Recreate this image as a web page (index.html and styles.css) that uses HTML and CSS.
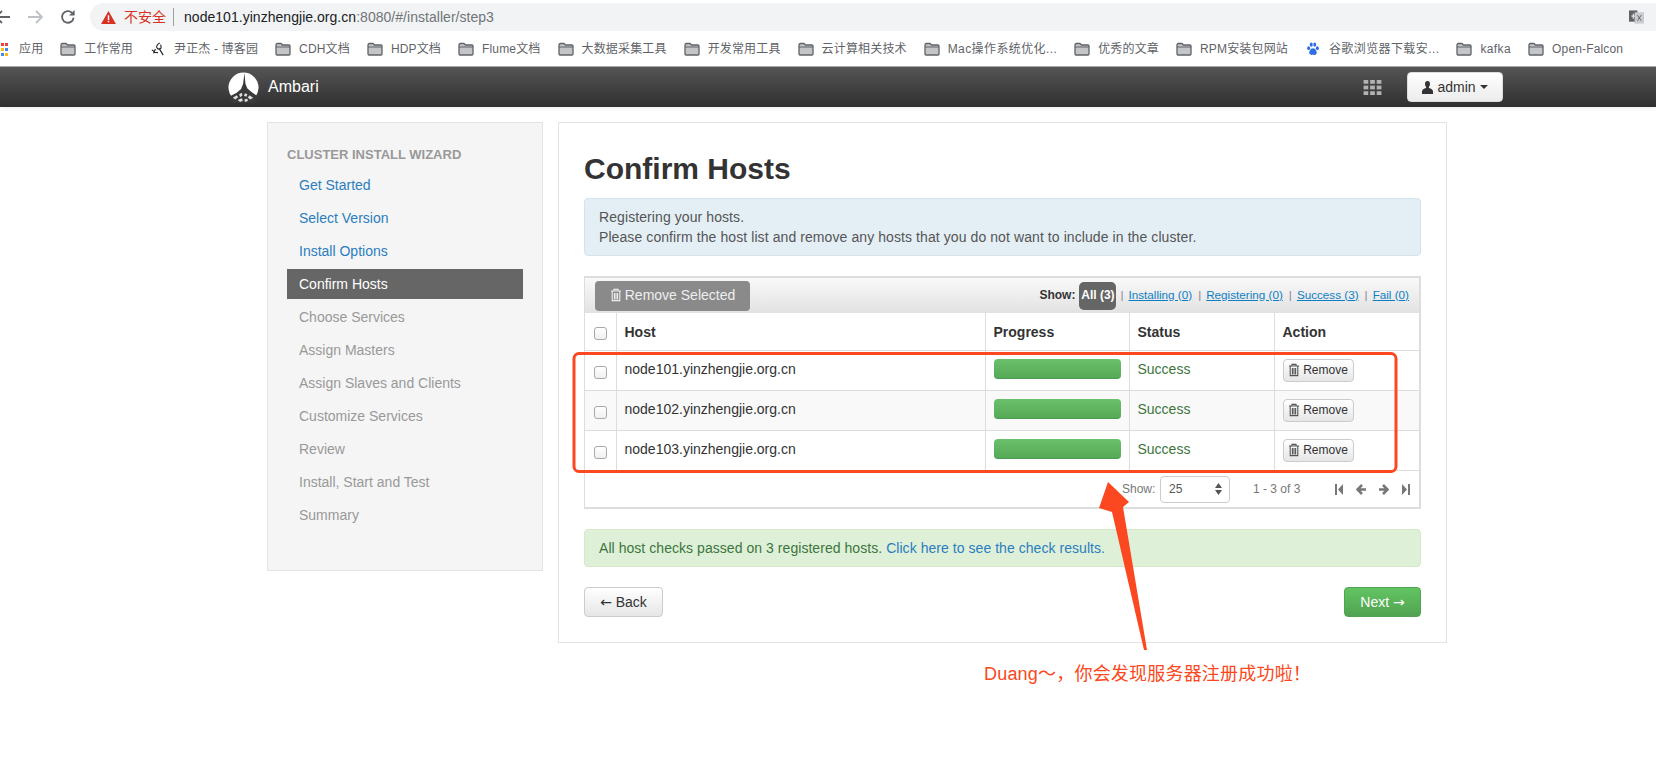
FILE: index.html
```html
<!DOCTYPE html>
<html lang="zh-CN">
<head>
<meta charset="utf-8">
<title>Ambari</title>
<link rel="stylesheet" href="styles.css">
</head>
<body>
<svg width="0" height="0" class="defs">
  <defs>
    <symbol id="folder" viewBox="0 0 16 14"><path d="M1 3.2 Q1 1.5 2.5 1.5 H6 L7.5 3 H14 Q15 3 15 4 V12 Q15 13 14 13 H2 Q1 13 1 12 Z" fill="#c4c5c7" stroke="#5f6368" stroke-width="1.3"/><path d="M1 5 H15" stroke="#5f6368" stroke-width="1"/></symbol>
    <symbol id="trash" viewBox="0 0 12 14"><path d="M1 3 H11 M4 3 V1.4 H8 V3 M2.2 3.4 V12.6 H9.8 V3.4 M4.4 5 V11.4 M6 5 V11.4 M7.6 5 V11.4" fill="none" stroke="currentColor" stroke-width="1.1"/></symbol>
  </defs>
</svg>

<header class="chrome">
  <div class="toolbar">
    <svg class="nav-ic back-ic" viewBox="0 0 16 16"><path d="M16 8 H2 M8 2 L2 8 L8 14" fill="none" stroke="#5f6368" stroke-width="1.8"/></svg>
    <svg class="nav-ic fwd-ic" viewBox="0 0 16 16"><path d="M0 8 H14 M8 2 L14 8 L8 14" fill="none" stroke="#bdc1c6" stroke-width="1.8"/></svg>
    <svg class="nav-ic reload-ic" viewBox="0 0 16 16"><path d="M13.6 8.6 A5.8 5.8 0 1 1 12 3.9" fill="none" stroke="#5f6368" stroke-width="1.8"/><path d="M14.6 1 V6.6 H9 Z" fill="#5f6368"/></svg>
    <div class="omnibox">
      <svg class="warn-ic" viewBox="0 0 16 14"><path d="M8 0 L16 14 H0 Z" fill="#d93025"/><path d="M7.2 4.6 H8.8 V9.6 H7.2 Z M7.2 10.6 H8.8 V12.2 H7.2 Z" fill="#fff"/></svg>
      <span class="insecure">不安全</span>
      <span class="omni-sep"></span>
      <span class="url">node101.yinzhengjie.org.cn<span class="url-rest">:8080/#/installer/step3</span></span>
    </div>
    <svg class="translate-ic" viewBox="0 0 16 14"><rect x="0" y="0" width="9" height="12" fill="#5f6368"/><rect x="6" y="2" width="10" height="12" fill="#c9cbce"/><path d="M2.5 6 H6.5 M4.5 3.5 V9" stroke="#fff" stroke-width="1"/><path d="M9 5 L13 11 M13 5 L9 11" stroke="#5f6368" stroke-width="1"/></svg>
  </div>
  <nav class="bookmarks">
    <a class="bm bm-apps"><svg class="bm-ic apps-ic" viewBox="0 0 8 13"><rect x="-4" y="0" width="3" height="3" fill="#ea4335"/><rect x="1" y="0" width="3" height="3" fill="#ea4335"/><rect x="5" y="0" width="3" height="3" fill="#ea4335"/><rect x="1" y="5" width="3" height="3" fill="#fbbc04"/><rect x="5" y="5" width="3" height="3" fill="#4285f4"/><rect x="1" y="10" width="3" height="3" fill="#4285f4"/><rect x="5" y="10" width="3" height="3" fill="#fbbc04"/></svg>应用</a>
    <a class="bm"><svg class="bm-ic"><use href="#folder"/></svg>工作常用</a>
    <a class="bm"><svg class="bm-ic" viewBox="0 0 16 16"><path d="M1 9 Q5 13 8 12 M10 1 Q4 5 8 8 Q13 9 11 3 M9 7 L14 15 M5 8 L3 13" fill="none" stroke="#222" stroke-width="1.3"/></svg>尹正杰 - 博客园</a>
    <a class="bm"><svg class="bm-ic"><use href="#folder"/></svg>CDH文档</a>
    <a class="bm"><svg class="bm-ic"><use href="#folder"/></svg>HDP文档</a>
    <a class="bm"><svg class="bm-ic"><use href="#folder"/></svg>Flume文档</a>
    <a class="bm"><svg class="bm-ic"><use href="#folder"/></svg>大数据采集工具</a>
    <a class="bm"><svg class="bm-ic"><use href="#folder"/></svg>开发常用工具</a>
    <a class="bm"><svg class="bm-ic"><use href="#folder"/></svg>云计算相关技术</a>
    <a class="bm bm-long"><svg class="bm-ic"><use href="#folder"/></svg>Mac操作系统优化...</a>
    <a class="bm"><svg class="bm-ic"><use href="#folder"/></svg>优秀的文章</a>
    <a class="bm"><svg class="bm-ic"><use href="#folder"/></svg>RPM安装包网站</a>
    <a class="bm bm-long"><svg class="bm-ic" viewBox="0 0 16 16"><g fill="#2f6fe4"><ellipse cx="3" cy="7" rx="1.7" ry="2.2"/><ellipse cx="6" cy="3" rx="1.7" ry="2.4"/><ellipse cx="10" cy="3" rx="1.7" ry="2.4"/><ellipse cx="13" cy="7" rx="1.7" ry="2.2"/><path d="M8 7 C5 7 3 11 4 13.5 C5 15.5 7 14.6 8 14.6 C9 14.6 11 15.5 12 13.5 C13 11 11 7 8 7 Z"/></g></svg>谷歌浏览器下载安...</a>
    <a class="bm bm-wide"><svg class="bm-ic"><use href="#folder"/></svg>kafka</a>
    <a class="bm"><svg class="bm-ic"><use href="#folder"/></svg>Open-Falcon</a>
  </nav>
</header>

<div class="navbar">
  <div class="brand">
    <svg class="logo" viewBox="0 0 32 32">
      <circle cx="16" cy="16" r="15.5" fill="#fff"/>
      <path d="M17 1 L18 12 L20 17 L24 20.5 L32 26 L28 32 H4 L0 26 L9 21.5 L13.5 17.5 L15.6 12 Z" fill="#3a3a3a"/>
      <path d="M5 26.5 L9 24 L10.5 26 L7.5 28.5 Z M11.5 23 L14 21.5 L15 24 L12.5 26 Z M17.5 22 L20 23 L19 25.5 L16.5 24.5 Z M22 24 L26 26.5 L23 28.5 L20.5 26.5 Z M10 29 L14 27 L15.5 29.5 L12.5 31 Z M17 28 L20 27.5 L20.5 30 L17.5 31 Z" fill="#e0e0e0"/>
    </svg>
    <span class="brand-name">Ambari</span>
  </div>
  <div class="nav-right">
    <svg class="grid-ic" viewBox="0 0 19 16"><g fill="#b3b3b3"><rect width="5" height="4"/><rect x="7" width="5" height="4"/><rect x="14" width="5" height="4"/><rect y="6" width="5" height="4"/><rect x="7" y="6" width="5" height="4"/><rect x="14" y="6" width="5" height="4"/><rect y="12" width="5" height="4"/><rect x="7" y="12" width="5" height="4"/><rect x="14" y="12" width="5" height="4"/></g></svg>
    <button class="admin-btn"><svg class="user-ic" viewBox="0 0 11 13"><path d="M5.5 0 C3.8 0 3 1.3 3 3 C3 4.4 3.6 5.4 4.2 6 L4 7 C2 7.6 0 8.4 0 10.5 V13 H11 V10.5 C11 8.4 9 7.6 7 7 L6.8 6 C7.4 5.4 8 4.4 8 3 C8 1.3 7.2 0 5.5 0 Z" fill="#333"/></svg>admin<span class="caret"></span></button>
  </div>
</div>

<main class="page">
  <aside class="wizard">
    <h2 class="wizard-title">CLUSTER INSTALL WIZARD</h2>
    <ul class="steps">
      <li class="step step-done">Get Started</li>
      <li class="step step-done">Select Version</li>
      <li class="step step-done">Install Options</li>
      <li class="step step-active">Confirm Hosts</li>
      <li class="step">Choose Services</li>
      <li class="step">Assign Masters</li>
      <li class="step">Assign Slaves and Clients</li>
      <li class="step">Customize Services</li>
      <li class="step">Review</li>
      <li class="step">Install, Start and Test</li>
      <li class="step">Summary</li>
    </ul>
  </aside>

  <section class="panel">
    <h1 class="title">Confirm Hosts</h1>
    <div class="alert alert-info">Registering your hosts.<br>Please confirm the host list and remove any hosts that you do not want to include in the cluster.</div>

    <div class="hosts">
      <div class="hosts-toolbar">
        <button class="remove-selected"><svg class="trash-ic"><use href="#trash"/></svg>Remove Selected</button>
        <div class="filters">
          <b class="filters-label">Show:</b>
          <span class="pill">All (3)</span>
          <span class="sep">|</span><a class="filter">Installing (0)</a>
          <span class="sep">|</span><a class="filter">Registering (0)</a>
          <span class="sep">|</span><a class="filter">Success (3)</a>
          <span class="sep">|</span><a class="filter">Fail (0)</a>
        </div>
      </div>
      <table class="hosts-table">
        <colgroup><col class="c-check"><col class="c-host"><col class="c-prog"><col class="c-status"><col class="c-action"></colgroup>
        <thead>
          <tr><th><input type="checkbox" class="cb"></th><th>Host</th><th>Progress</th><th>Status</th><th>Action</th></tr>
        </thead>
        <tbody>
          <tr>
            <td><input type="checkbox" class="cb"></td><td>node101.yinzhengjie.org.cn</td>
            <td><div class="bar"></div></td><td class="ok">Success</td>
            <td><button class="remove"><svg class="trash-ic small"><use href="#trash"/></svg>Remove</button></td>
          </tr>
          <tr class="alt">
            <td><input type="checkbox" class="cb"></td><td>node102.yinzhengjie.org.cn</td>
            <td><div class="bar"></div></td><td class="ok">Success</td>
            <td><button class="remove"><svg class="trash-ic small"><use href="#trash"/></svg>Remove</button></td>
          </tr>
          <tr>
            <td><input type="checkbox" class="cb"></td><td>node103.yinzhengjie.org.cn</td>
            <td><div class="bar"></div></td><td class="ok">Success</td>
            <td><button class="remove"><svg class="trash-ic small"><use href="#trash"/></svg>Remove</button></td>
          </tr>
        </tbody>
      </table>
      <div class="hosts-footer">
        <span class="show-label">Show:</span>
        <div class="size-select"><span>25</span><svg class="updown" viewBox="0 0 7 12"><path d="M3.5 0 L7 5 H0 Z M0 7 H7 L3.5 12 Z" fill="#555"/></svg></div>
        <span class="range">1 - 3 of 3</span>
        <div class="pager">
          <svg class="pg-edge" viewBox="0 0 8 11"><path d="M0 0 H2 V11 H0 Z M8 0 V11 L3 5.5 Z" fill="#777"/></svg>
          <svg class="pg-arrow" viewBox="0 0 10 11"><path d="M10 5.5 H2 M6 1 L1.5 5.5 L6 10" fill="none" stroke="#777" stroke-width="2.6"/></svg>
          <svg class="pg-arrow" viewBox="0 0 10 11"><path d="M0 5.5 H8 M4 1 L8.5 5.5 L4 10" fill="none" stroke="#777" stroke-width="2.6"/></svg>
          <svg class="pg-edge" viewBox="0 0 8 11"><path d="M8 0 H6 V11 H8 Z M0 0 V11 L5 5.5 Z" fill="#777"/></svg>
        </div>
      </div>
    </div>

    <div class="alert alert-success">All host checks passed on 3 registered hosts. <a class="check-link">Click here to see the check results.</a></div>

    <div class="actions">
      <button class="btn-back"><span class="arr">←</span> Back</button>
      <button class="btn-next">Next <span class="arr">→</span></button>
    </div>
  </section>
</main>

<svg class="markup" viewBox="0 0 1656 779">
  <rect x="574" y="353.5" width="822" height="118" rx="5" fill="none" stroke="#fb4820" stroke-width="3"/>
  <path d="M1108 482 L1129 502 L1123 507 L1147 650 L1144 650 L1112 512 L1099 508 Z" fill="#fb4820"/>
</svg>
<div class="note">Duang～，你会发现服务器注册成功啦！</div>
</body>
</html>
```

FILE: styles.css
```css
* { box-sizing: border-box; }
html, body { margin: 0; padding: 0; }
body {
  width: 1656px;
  height: 779px;
  overflow: hidden;
  position: relative;
  background: #fff;
  color: #333;
  font: 14px/20px "Liberation Sans", "Noto Sans CJK SC", sans-serif;
}
.defs { position: absolute; }
button { font-family: inherit; margin: 0; }

/* browser chrome */
.chrome { height: 67px; border-bottom: 1px solid #a9a9a9; background: #fff; overflow: hidden; }
.toolbar { height: 34px; display: flex; align-items: center; position: relative; }
.nav-ic { width: 16px; height: 16px; flex: none; }
.back-ic { margin-left: -6px; }
.fwd-ic { margin-left: 18px; }
.reload-ic { margin-left: 16px; }
.omnibox {
  margin-left: 14px;
  width: 1570px;
  height: 28px;
  background: #f1f3f4;
  border-radius: 14px 0 0 14px;
  display: flex;
  align-items: center;
  padding-left: 11px;
  flex: none;
}
.warn-ic { width: 15px; height: 13px; flex: none; }
.insecure { margin-left: 8px; color: #d93025; font-size: 14px; }
.omni-sep { width: 1px; height: 18px; background: #9aa0a6; margin: 0 10px 0 7px; }
.url { color: #202124; font-size: 14px; letter-spacing: .035px; }
.url-rest { color: #70757a; }
.translate-ic { position: absolute; left: 1629px; top: 10px; width: 15px; height: 14px; }

.bookmarks { height: 29px; padding-top: 1px; display: flex; align-items: center; color: #5f6368; font-size: 12px; letter-spacing: .16px; white-space: nowrap; }
.bm { display: flex; align-items: center; margin-right: 17px; }
.bm-long { letter-spacing: .4px; }
.bm-wide { letter-spacing: .4px; }
.bm-ic { width: 16px; height: 14px; margin-right: 8px; flex: none; overflow: visible; }
.apps-ic { width: 8px; height: 13px; margin-right: 11px; }

/* app navbar */
.navbar {
  height: 40px;
  background: linear-gradient(#555, #2f2f2f);
  display: flex;
  justify-content: space-between;
  align-items: center;
  padding: 0 153px 0 228px;
  box-shadow: 0 2px 3px rgba(0,0,0,.06);
}
.brand { display: flex; align-items: center; }
.logo { width: 31px; height: 31px; }
.brand-name { color: #fff; font-size: 16px; margin-left: 9px; }
.nav-right { display: flex; align-items: center; }
.grid-ic { width: 19px; height: 15px; margin-right: 25px; }
.admin-btn {
  width: 96px;
  height: 30px;
  background: linear-gradient(#fff, #ececec);
  border: 1px solid #ddd;
  border-radius: 4px;
  color: #333;
  font-size: 14px;
  display: flex;
  align-items: center;
  justify-content: center;
  padding: 0;
}
.user-ic { width: 11px; height: 13px; margin-right: 4px; }
.caret { border: 4px solid transparent; border-top-color: #333; border-bottom: 0; margin-left: 4px; }

/* page */
.page { display: flex; align-items: flex-start; gap: 15px; padding: 15px 0 0 267px; }
.wizard {
  width: 276px;
  height: 449px;
  background: #f5f5f5;
  border: 1px solid #e3e3e3;
  padding: 23px 19px 0;
}
.wizard-title { margin: 0; font-size: 13px; line-height: 18px; font-weight: bold; color: #999; }
.steps { list-style: none; margin: 6px 0 0; padding: 0; }
.step { height: 30px; line-height: 30px; margin-bottom: 3px; padding-left: 12px; color: #999; }
.step-done { color: #2a7ebf; }
.step-active { background: #666; color: #fff; }

.panel {
  width: 889px;
  height: 521px;
  border: 1px solid #e3e3e3;
  padding: 28px 25px 0;
}
.title { margin: 0 0 11px; font-size: 30px; line-height: 36px; font-weight: bold; color: #333; }
.alert { border: 1px solid; border-radius: 4px; padding: 8px 14px; }
.alert-info { height: 58px; background: #e4eff5; border-color: #d3e3ec; color: #555; letter-spacing: .085px; }
.alert-success { height: 38px; margin-top: 20px; background: #dff0d8; border-color: #d6e9c6; color: #3c763d; letter-spacing: .05px; }
.check-link { color: #2a7ebf; }

.hosts { margin-top: 20px; height: 233px; border: 2px solid #ddd; border-left-width: 1px; }
.hosts-toolbar {
  height: 35px;
  background: linear-gradient(#f9f9f9, #e2e2e2);
  display: flex;
  justify-content: space-between;
  align-items: center;
  padding: 0 10px 0 10px;
}
.remove-selected {
  width: 155px;
  height: 30px;
  background: #8a8a8a;
  border: 0;
  border-radius: 4px;
  color: #eee;
  font-size: 14px;
  line-height: 18px;
  display: flex;
  align-items: center;
  justify-content: center;
  padding: 0 0 2px;
}
.trash-ic { width: 12px; height: 14px; margin-right: 3px; }
.trash-ic.small { color: #555; }
.filters { display: flex; align-items: center; font-size: 11.7px; }
.filters-label { color: #333; font-size: 12px; margin-right: 4px; padding-bottom: 2px; }
.pill { background: #666; color: #fff; border-radius: 5px; width: 37px; height: 28px; line-height: 26px; text-align: center; font-weight: bold; font-size: 12px; }
.sep { color: #8a7f99; margin: 0 5px 0 4px; padding-bottom: 2px; }
.filter { color: #0f7fc4; text-decoration: underline; margin-right: 2px; padding-bottom: 2px; }
.filter:last-child { margin-right: 0; }
.hosts-table { width: 100%; border-collapse: collapse; table-layout: fixed; }
.c-check { width: 31px; }
.c-host { width: 369px; }
.c-prog { width: 144px; }
.c-status { width: 145px; }
.hosts-table th, .hosts-table td { border: 1px solid #ddd; padding: 0 8px; text-align: left; }
.hosts-table tr > :first-child { border-left: 0; }
.hosts-table tr > :last-child { border-right: 0; }
.hosts-table thead tr:first-child th { border-top: 0; }
.hosts-table th { height: 37px; padding-top: 2px; font-weight: bold; color: #333; vertical-align: middle; }
.hosts-table td { height: 40px; padding-top: 8px; color: #333; vertical-align: top; }
.alt td { background: #f9f9f9; }
.hosts-table .ok { color: #3c763d; }
.cb {
  appearance: none;
  -webkit-appearance: none;
  display: block;
  margin: 7px 0 0 1px;
  width: 13px;
  height: 13px;
  border: 1px solid #a9a9a9;
  border-radius: 3px;
  background: linear-gradient(#fff, #f0f0f0);
}
th .cb { margin-top: 3px; }
.bar { width: 127px; height: 20px; border-radius: 4px; border-bottom: 1px solid #4e9c4e; background: linear-gradient(#6bc06b, #56aa56); }
.remove {
  width: 71px;
  height: 23px;
  display: flex;
  align-items: center;
  justify-content: center;
  background: linear-gradient(#fff, #e6e6e6);
  border: 1px solid #ccc;
  border-radius: 4px;
  font-size: 12px;
  color: #333;
  padding: 0;
}
.hosts-footer { height: 37px; display: flex; align-items: center; padding-left: 537px; color: #777; font-size: 12px; }
.show-label { width: 38px; }
.size-select {
  width: 70px;
  height: 27px;
  border: 1px solid #ccc;
  border-radius: 4px;
  display: flex;
  align-items: center;
  justify-content: space-between;
  padding: 0 7px 0 8px;
  color: #555;
}
.updown { width: 7px; height: 12px; }
.range { margin-left: 23px; width: 82px; }
.pager { display: flex; gap: 13px; }
.pg-edge { width: 8px; height: 11px; }
.pg-arrow { width: 10px; height: 11px; }

.actions { display: flex; justify-content: space-between; margin-top: 20px; }
.btn-back, .btn-next { height: 30px; border-radius: 4px; font-size: 14px; padding: 0; }
.btn-back { width: 79px; background: linear-gradient(#fff, #e6e6e6); border: 1px solid #ccc; color: #333; }
.btn-next { width: 77px; background: linear-gradient(#62c462, #51a351); border: 1px solid #51a351; color: #fff; }
.arr { font-family: "DejaVu Sans", sans-serif; }

/* hand-drawn screenshot annotation, over the page */
.markup { position: absolute; left: 0; top: 0; width: 1656px; height: 779px; pointer-events: none; }
.note { position: absolute; left: 984px; top: 662px; color: #fb4820; font-size: 18px; letter-spacing: .2px; line-height: 24px; white-space: nowrap; }
```
